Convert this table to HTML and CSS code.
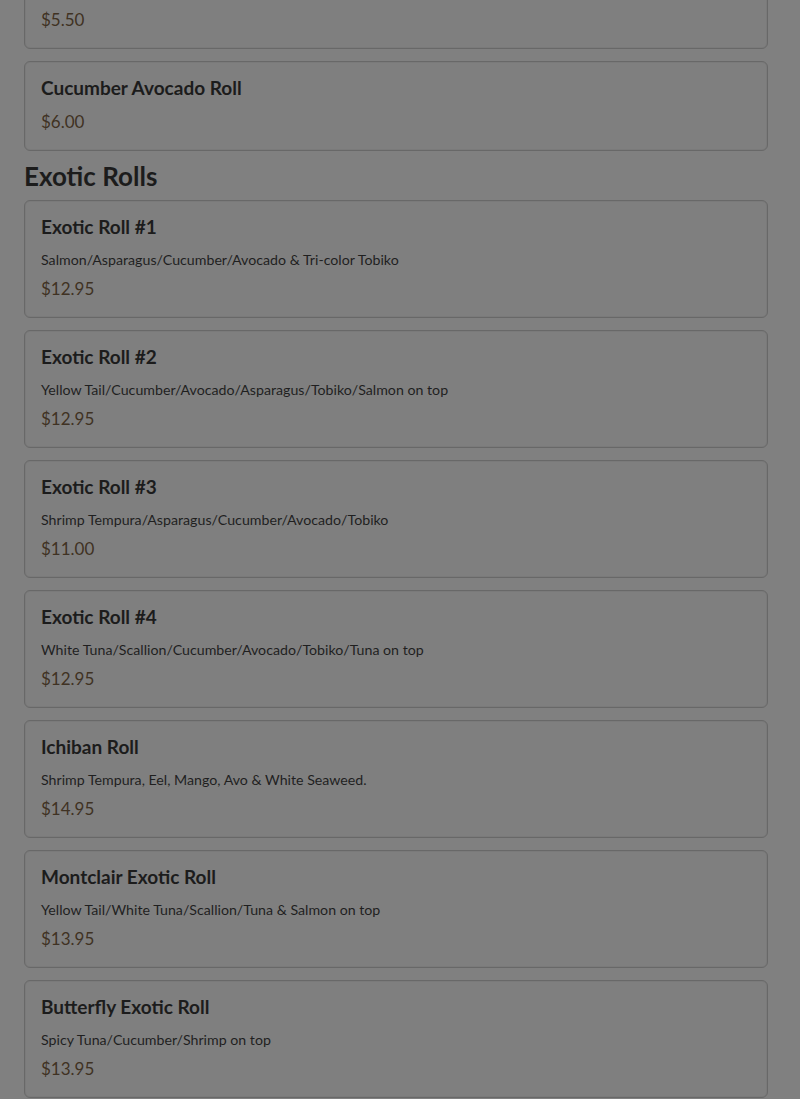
FILE: index.html
```html
<!DOCTYPE html>
<html lang="en">
<head>
  <meta charset="UTF-8">
  <meta name="viewport" content="width=device-width, initial-scale=1.0">
  <title>Menu</title>
  <link rel="stylesheet" href="styles.css">
</head>
<body>

<main class="menu">
  <div class="item">
    <p class="price">$5.50</p>
  </div>
  <div class="item">
    <h3>Cucumber Avocado Roll</h3>
    <p class="price">$6.00</p>
  </div>

  <h2>Exotic Rolls</h2>

  <div class="item">
    <h3>Exotic Roll #1</h3>
    <p class="desc">Salmon/Asparagus/Cucumber/Avocado &amp; Tri-color Tobiko</p>
    <p class="price">$12.95</p>
  </div>
  <div class="item">
    <h3>Exotic Roll #2</h3>
    <p class="desc">Yellow Tail/Cucumber/Avocado/Asparagus/Tobiko/Salmon on top</p>
    <p class="price">$12.95</p>
  </div>
  <div class="item">
    <h3>Exotic Roll #3</h3>
    <p class="desc">Shrimp Tempura/Asparagus/Cucumber/Avocado/Tobiko</p>
    <p class="price">$11.00</p>
  </div>
  <div class="item">
    <h3>Exotic Roll #4</h3>
    <p class="desc">White Tuna/Scallion/Cucumber/Avocado/Tobiko/Tuna on top</p>
    <p class="price">$12.95</p>
  </div>
  <div class="item">
    <h3>Ichiban Roll</h3>
    <p class="desc">Shrimp Tempura, Eel, Mango, Avo &amp; White Seaweed.</p>
    <p class="price">$14.95</p>
  </div>
  <div class="item">
    <h3>Montclair Exotic Roll</h3>
    <p class="desc">Yellow Tail/White Tuna/Scallion/Tuna &amp; Salmon on top</p>
    <p class="price">$13.95</p>
  </div>
  <div class="item">
    <h3>Butterfly Exotic Roll</h3>
    <p class="desc">Spicy Tuna/Cucumber/Shrimp on top</p>
    <p class="price">$13.95</p>
  </div>
</main>

</body>
</html>
```

FILE: styles.css
```css
body {
  font-family: Lato, "Open Sans", sans-serif;
  background-color: #808080;
  color: #1c1c1c;
  margin: 0;
}

.menu {
  display: flex;
  flex-direction: column;
  gap: 12px;
  padding: 0 32px 24px 24px;
  margin-top: -8px;
}

.item {
  background-color: #7f7f7f;
  border: 1px solid #686868;
  border-radius: 6px;
  padding: 15px 16px 16.2px;
  box-shadow: inset 0 0 0 1px #7a7a7a;
}

h2 {
  font-size: 26px;
  font-weight: 700;
  line-height: 1.2;
  margin: -2px 0 -4px;
}

h3 {
  font-size: 19px;
  font-weight: 700;
  line-height: 1.2;
  margin: 0 0 10px;
}

.desc {
  font-size: 14.2px;
  line-height: 21px;
  margin: 0 0 7px;
  color: #1f1f1f;
}

.price {
  font-size: 17px;
  line-height: 24px;
  margin: 0;
  color: #3f3223;
}
```
